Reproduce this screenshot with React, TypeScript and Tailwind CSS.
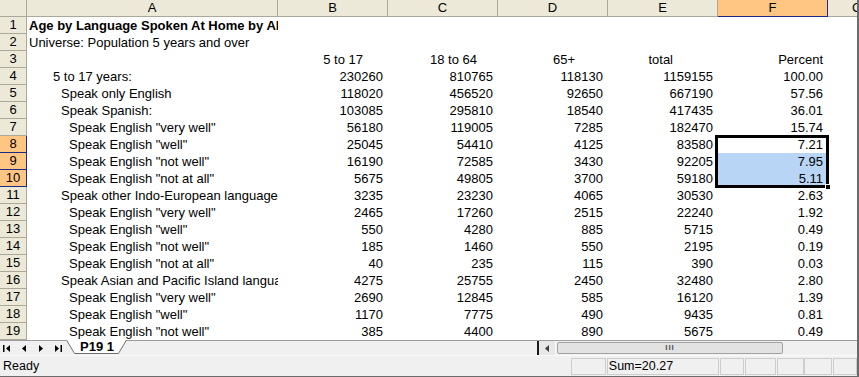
import React from 'react'

type Row = {
  label: string
  indent: number
  bold?: boolean
  vals: string[]
}

const cols = [
  { key: 'A', w: 'w-[251px]' },
  { key: 'B', w: 'w-[110px]' },
  { key: 'C', w: 'w-[110px]' },
  { key: 'D', w: 'w-[110px]' },
  { key: 'E', w: 'w-[110px]' },
  { key: 'F', w: 'w-[110px]' },
]

const rows: Row[] = [
  { label: 'Age by Language Spoken At Home by Ability to Speak English', indent: 0, bold: true, vals: [] },
  { label: 'Universe: Population 5 years and over', indent: 0, vals: [] },
  { label: '', indent: 0, vals: [] },
  { label: '5 to 17 years:', indent: 1, vals: ['230260', '810765', '118130', '1159155', '100.00'] },
  { label: 'Speak only English', indent: 2, vals: ['118020', '456520', '92650', '667190', '57.56'] },
  { label: 'Speak Spanish:', indent: 2, vals: ['103085', '295810', '18540', '417435', '36.01'] },
  { label: 'Speak English "very well"', indent: 3, vals: ['56180', '119005', '7285', '182470', '15.74'] },
  { label: 'Speak English "well"', indent: 3, vals: ['25045', '54410', '4125', '83580', '7.21'] },
  { label: 'Speak English "not well"', indent: 3, vals: ['16190', '72585', '3430', '92205', '7.95'] },
  { label: 'Speak English "not at all"', indent: 3, vals: ['5675', '49805', '3700', '59180', '5.11'] },
  { label: 'Speak other Indo-European languages:', indent: 2, vals: ['3235', '23230', '4065', '30530', '2.63'] },
  { label: 'Speak English "very well"', indent: 3, vals: ['2465', '17260', '2515', '22240', '1.92'] },
  { label: 'Speak English "well"', indent: 3, vals: ['550', '4280', '885', '5715', '0.49'] },
  { label: 'Speak English "not well"', indent: 3, vals: ['185', '1460', '550', '2195', '0.19'] },
  { label: 'Speak English "not at all"', indent: 3, vals: ['40', '235', '115', '390', '0.03'] },
  { label: 'Speak Asian and Pacific Island languages:', indent: 2, vals: ['4275', '25755', '2450', '32480', '2.80'] },
  { label: 'Speak English "very well"', indent: 3, vals: ['2690', '12845', '585', '16120', '1.39'] },
  { label: 'Speak English "well"', indent: 3, vals: ['1170', '7775', '490', '9435', '0.81'] },
  { label: 'Speak English "not well"', indent: 3, vals: ['385', '4400', '890', '5675', '0.49'] },
]

const indentPad = ['pl-[2px]', 'pl-[26px]', 'pl-[34px]', 'pl-[42px]']

// row 3 column captions sit at odd offsets in the sheet
const captions = [
  { text: '5 to 17', pr: 'pr-[25px]' },
  { text: '18 to 64', pr: 'pr-[21px]' },
  { text: '65+', pr: 'pr-[33px]' },
  { text: 'total', pr: 'pr-[45px]' },
  { text: 'Percent', pr: 'pr-[5px]' },
]

function Tri({ dir, bar }: { dir: 'l' | 'r'; bar?: boolean }) {
  return (
    <svg width="8" height="7" viewBox="0 0 8 7" className="block">
      {dir === 'l' ? (
        <>
          {bar && <rect x="0" y="0" width="1.5" height="7" fill="#000" />}
          <polygon points={bar ? '7,0 7,7 3,3.5' : '6,0 6,7 2,3.5'} fill="#000" />
        </>
      ) : (
        <>
          <polygon points={bar ? '1,0 1,7 5,3.5' : '2,0 2,7 6,3.5'} fill="#000" />
          {bar && <rect x="6.5" y="0" width="1.5" height="7" fill="#000" />}
        </>
      )}
    </svg>
  )
}

export default function App() {
  return (
    <div className="w-[859px] h-[377px] overflow-hidden bg-white border-r-2 border-b border-[#6b6b6b] font-['Liberation_Sans',Arial,sans-serif] text-[13px] text-black flex flex-col">
      {/* Grid */}
      <div className="relative h-[340px] flex flex-col">
        {/* Column headers */}
        <div className="flex h-[17px] leading-[16px]">
          <div className="w-[27px] bg-[#ece9d8] border-r border-b border-[#aca899]" />
          {cols.map((c) => (
            <div
              key={c.key}
              className={
                c.key === 'F'
                  ? `${c.w} text-center bg-[#ffc583] border-r border-b border-[#1c2a84]`
                  : `${c.w} text-center bg-[#ece9d8] border-r border-b border-[#aca899]`
              }
            >
              {c.key}
            </div>
          ))}
          <div className="w-[29px] overflow-hidden bg-[#ece9d8] border-b border-[#aca899] pl-[24px]">G</div>
        </div>

        {/* Rows */}
        {rows.map((r, i) => {
          const n = i + 1
          const sel = n >= 8 && n <= 10
          return (
            <div key={n} className="flex h-[17px] leading-[17px]">
              <div
                className={
                  sel
                    ? 'w-[27px] shrink-0 text-center leading-[16px] bg-[#ffc583] border-r border-b border-[#1c2a84]'
                    : 'w-[27px] shrink-0 text-center leading-[16px] bg-[#ece9d8] border-r border-b border-[#aca899]'
                }
              >
                {n}
              </div>
              <div className={`w-[251px] shrink-0 overflow-hidden whitespace-nowrap ${indentPad[r.indent]} ${r.bold ? 'font-bold' : ''}`}>
                {r.label}
              </div>
              {n === 3
                ? captions.map((c, j) => (
                    <div key={j} className={`w-[110px] shrink-0 text-right whitespace-nowrap ${c.pr}`}>
                      {c.text}
                    </div>
                  ))
                : [0, 1, 2, 3, 4].map((j) => (
                    <div
                      key={j}
                      className={
                        j === 4 && (n === 9 || n === 10)
                          ? 'w-[110px] shrink-0 text-right pr-[5px] bg-[#b9d5f6]'
                          : 'w-[110px] shrink-0 text-right pr-[5px]'
                      }
                    >
                      {r.vals[j] ?? ''}
                    </div>
                  ))}
              <div className="w-[29px] shrink-0" />
            </div>
          )
        })}

        {/* Selection outline over F8:F10 */}
        <div className="absolute left-[715px] top-[135px] w-[114px] h-[53px] border-[3px] border-black pointer-events-none" />
        <div className="absolute left-[825px] top-[184px] w-[6px] h-[6px] bg-black border border-white" />
      </div>

      {/* Sheet tabs + horizontal scroll bar */}
      <div className="h-[15px] flex bg-[#f0f0f0] border-t border-[#9d9d9d]">
        <div className="w-[537px] flex items-center">
          <div className="flex items-center gap-[9px] pl-[3px] w-[66px]">
            <Tri dir="l" bar />
            <Tri dir="l" />
            <Tri dir="r" />
            <Tri dir="r" bar />
          </div>
          <div className="relative -mt-[2px] w-[61px] h-[15px] flex items-center justify-center pl-[1px]">
            <svg width="61" height="15" viewBox="0 0 61 15" className="absolute left-0 top-0">
              <polygon points="0,0 60,0 53,14 8,14" fill="#fff" />
              <polyline points="0.5,0 8.5,13.5 52.5,13.5 60.5,0" fill="none" stroke="#6d6d6d" strokeWidth="1" />
            </svg>
            <span className="relative font-bold text-[13px] leading-[14px]">P19 1</span>
          </div>
        </div>
        <div className="w-[2px] bg-[#1a1a1a]" />
        <div className="w-[17px] flex items-center justify-center bg-[#e8e8e8] border-r border-[#f6f6f6]">
          <svg width="5" height="7" viewBox="0 0 5 7">
            <polygon points="4,0 4,7 0,3.5" fill="#404040" />
          </svg>
        </div>
        <div className="w-[226px] mt-[1px] mb-[1px] ml-[1px] rounded-[2px] border border-[#a2a2a2] bg-[#e2e2e2] flex items-center justify-center">
          <span className="text-[8px] leading-[8px] tracking-[1px] text-[#555] font-bold">III</span>
        </div>
        <div className="flex-1 bg-[#f0f0f0]" />
      </div>

      {/* Status bar */}
      <div className="flex-1 flex items-center bg-[#f0f0f0] border-t border-[#fafafa] text-[12.5px]">
        <span className="pl-[3px] w-[573px]">Ready</span>
        <div className="w-[35px] h-[17px] border border-[#cdcdcd]" />
        <div className="w-[113px] h-[17px] border border-[#cdcdcd] ml-px pl-[1px] leading-[15px]">Sum=20.27</div>
        <div className="w-[24px] h-[17px] border border-[#cdcdcd] ml-px" />
        <div className="w-[31px] h-[17px] border border-[#cdcdcd] ml-px" />
        <div className="w-[27px] h-[17px] border border-[#cdcdcd] ml-px" />
        <div className="w-[28px] h-[17px] border border-[#cdcdcd]" />
        <div className="w-[24px] h-[17px] border border-[#cdcdcd] ml-px" />
      </div>
    </div>
  )
}
